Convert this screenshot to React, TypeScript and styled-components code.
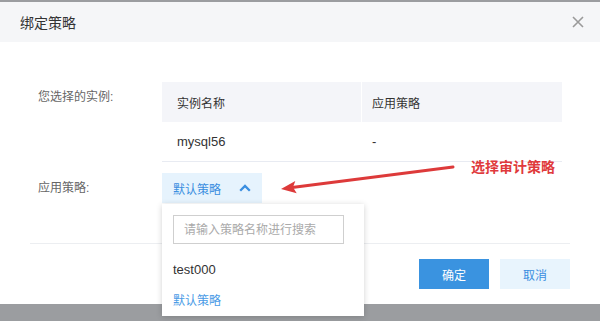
import React from "react";
import styled, { createGlobalStyle } from "styled-components";

const GlobalStyle = createGlobalStyle`
  html, body { margin: 0; padding: 0; }
  body {
    background: #9b9da0;
    font-family: "Liberation Sans", "Noto Sans CJK SC", sans-serif;
    width: 600px;
    height: 321px;
    overflow: hidden;
  }
`;

const Stage = styled.div`
  position: relative;
  width: 600px;
  height: 321px;
  padding-top: 2px;
  box-sizing: border-box;
`;

const Dialog = styled.div`
  background: #fff;
  width: 600px;
`;

const Header = styled.div`
  height: 40px;
  background: #f5f6f8;
  display: flex;
  align-items: center;
  justify-content: space-between;
  padding: 0 16px 0 20px;
`;

const Title = styled.h2`
  margin: 0;
  font-size: 14px;
  font-weight: normal;
  color: #333;
`;

const CloseButton = styled.button`
  border: 0;
  background: transparent;
  padding: 0;
  width: 12px;
  height: 12px;
  display: flex;
  cursor: pointer;
`;

const Body = styled.div`
  padding: 40px 38px 40px;
  display: flex;
  flex-direction: column;
  gap: 11px;
`;

const FormRow = styled.div`
  display: flex;
  align-items: flex-start;
`;

const Label = styled.div`
  width: 124px;
  flex: none;
  font-size: 12px;
  line-height: 30px;
  color: #666;
`;

const Table = styled.div`
  width: 400px;
  display: flex;
  flex-direction: column;
`;

const TRow = styled.div<{ $head?: boolean }>`
  display: grid;
  grid-template-columns: 199px 200px;
  column-gap: 1px;
  height: 40px;
  box-sizing: border-box;
  border-bottom: ${(p) => (p.$head ? "none" : "1px solid #e8ebf2")};
`;

const Cell = styled.div<{ $head?: boolean; $latin?: boolean; $first?: boolean }>`
  display: flex;
  align-items: center;
  padding-left: ${(p) => (p.$first ? "15px" : "10px")};
  background: ${(p) => (p.$head ? "#f4f5f9" : "#fff")};
  font-size: ${(p) => (p.$latin ? "13px" : "12px")};
  color: #333;
`;

const SelectWrap = styled.div`
  position: relative;
`;

const SelectBox = styled.div`
  width: 100px;
  height: 30px;
  box-sizing: border-box;
  padding: 0 11px;
  background: #e6f3fd;
  display: flex;
  align-items: center;
  justify-content: space-between;
  font-size: 12px;
  color: #3a8ee0;
`;

const Dropdown = styled.div`
  position: absolute;
  top: 31px;
  left: 0;
  width: 202px;
  box-sizing: border-box;
  background: #fff;
  padding: 11px 0 2px;
  box-shadow: 0 1px 6px rgba(0, 0, 0, 0.18);
  z-index: 10;
`;

const SearchInput = styled.input`
  display: block;
  margin: 0 11px 10px;
  width: 171px;
  height: 29px;
  box-sizing: border-box;
  border: 1px solid #cfcfcf;
  padding: 0 10px;
  font-family: inherit;
  font-size: 12px;
  color: #333;
  outline: none;
  &::placeholder { color: #aaa; }
`;

const Option = styled.div<{ $active?: boolean; $latin?: boolean }>`
  height: 30px;
  display: flex;
  align-items: center;
  padding-left: 11px;
  font-size: ${(p) => (p.$latin ? "13px" : "12px")};
  color: ${(p) => (p.$active ? "#4a9be6" : "#333")};
`;

const Footer = styled.div`
  margin: 0 30px;
  border-top: 1px solid #eceef1;
  padding: 15px 0;
  display: flex;
  justify-content: flex-end;
  gap: 11px;
`;

const Button = styled.button<{ $primary?: boolean }>`
  width: 70px;
  height: 30px;
  border: 0;
  padding: 0;
  font-family: inherit;
  font-size: 12px;
  background: ${(p) => (p.$primary ? "#3a93e0" : "#e8f4fd")};
  color: ${(p) => (p.$primary ? "#fff" : "#3a8ee0")};
  cursor: pointer;
`;

const Annotation = styled.div`
  position: absolute;
  inset: 0;
  pointer-events: none;
  z-index: 20;
`;

const AnnotationText = styled.div`
  position: absolute;
  left: 471px;
  top: 157px;
  line-height: 20px;
  font-size: 14px;
  font-weight: bold;
  color: #e03a3c;
`;

const ArrowSvg = styled.svg`
  position: absolute;
  left: 0;
  top: 0;
`;

export default function App() {
  return (
    <>
      <GlobalStyle />
      <Stage>
        <Dialog>
          <Header>
            <Title>绑定策略</Title>
            <CloseButton aria-label="close">
              <svg width="12" height="12" viewBox="0 0 12 12">
                <path d="M1 1 L11 11 M11 1 L1 11" stroke="#9a9a9a" strokeWidth="1.6" fill="none" />
              </svg>
            </CloseButton>
          </Header>
          <Body>
            <FormRow>
              <Label>您选择的实例:</Label>
              <Table>
                <TRow $head>
                  <Cell $head $first>实例名称</Cell>
                  <Cell $head>应用策略</Cell>
                </TRow>
                <TRow>
                  <Cell $first $latin>mysql56</Cell>
                  <Cell $latin>-</Cell>
                </TRow>
              </Table>
            </FormRow>
            <FormRow>
              <Label>应用策略:</Label>
              <SelectWrap>
                <SelectBox>
                  <span>默认策略</span>
                  <svg width="12" height="8" viewBox="0 0 12 8">
                    <polyline points="1.2,6.8 6,2 10.8,6.8" stroke="#3a8ee0" strokeWidth="2.3" fill="none" />
                  </svg>
                </SelectBox>
                <Dropdown>
                  <SearchInput placeholder="请输入策略名称进行搜索" />
                  <Option $latin>test000</Option>
                  <Option $active>默认策略</Option>
                </Dropdown>
              </SelectWrap>
            </FormRow>
          </Body>
          <Footer>
            <Button $primary>确定</Button>
            <Button>取消</Button>
          </Footer>
        </Dialog>
        <Annotation>
          <AnnotationText>选择审计策略</AnnotationText>
          <ArrowSvg width="600" height="321" viewBox="0 0 600 321">
            <line x1="453" y1="167" x2="292" y2="187.5" stroke="#dd3a3a" strokeWidth="3" strokeLinecap="round" />
            <polygon points="281,189 295.3,181 293,187.3 296.7,193.3" fill="#dd3a3a" />
          </ArrowSvg>
        </Annotation>
      </Stage>
    </>
  );
}
